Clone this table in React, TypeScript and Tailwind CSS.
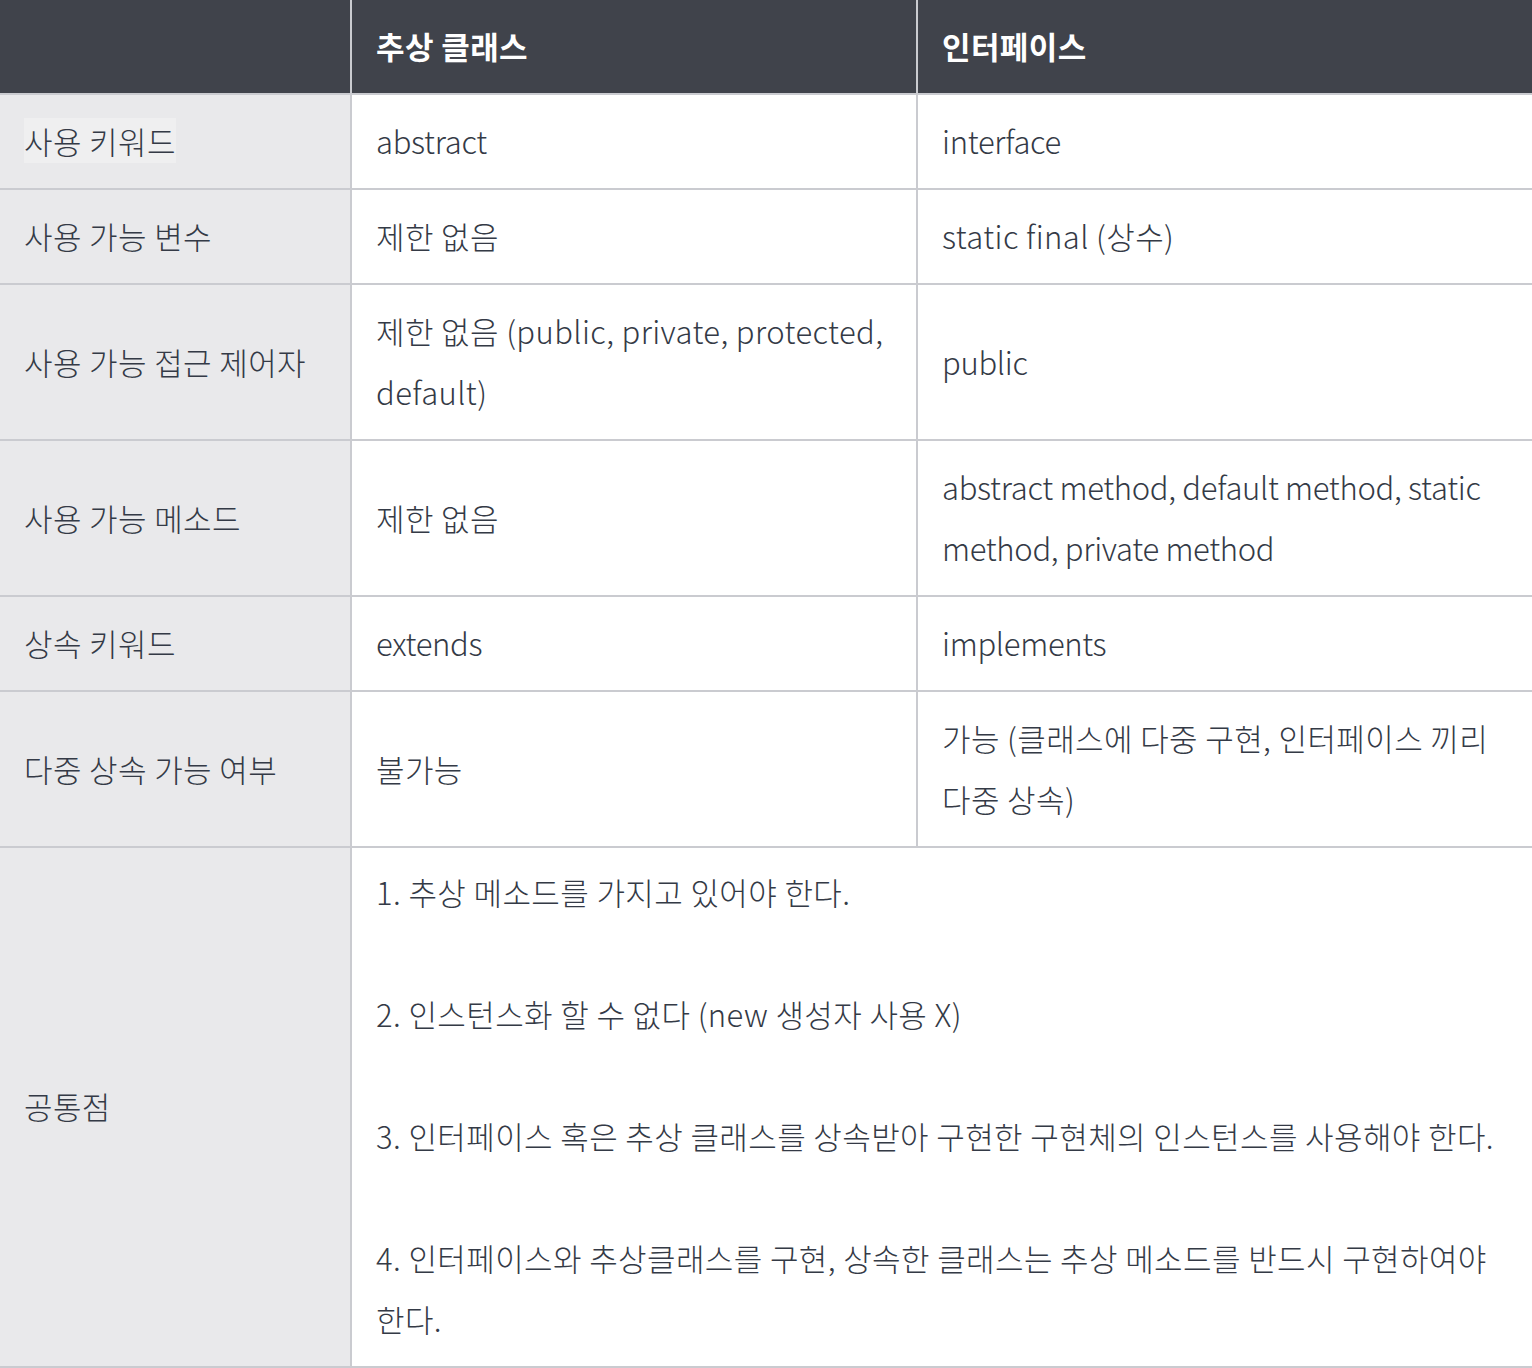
const rows: { label: string; a: string; b: string; latinA?: boolean; latinB?: boolean }[] = [
  { label: "사용 키워드", a: "abstract", b: "interface", latinA: true, latinB: true },
  { label: "사용 가능 변수", a: "제한 없음", b: "static final (상수)" },
  {
    label: "사용 가능 접근 제어자",
    a: "제한 없음 (public, private, protected, default)",
    b: "public",
    latinB: true,
  },
  {
    label: "사용 가능 메소드",
    a: "제한 없음",
    b: "abstract method, default method, static method, private method",
    latinB: true,
  },
  { label: "상속 키워드", a: "extends", b: "implements", latinA: true, latinB: true },
  {
    label: "다중 상속 가능 여부",
    a: "불가능",
    b: "가능 (클래스에 다중 구현, 인터페이스 끼리 다중 상속)",
  },
];

const common = [
  "1. 추상 메소드를 가지고 있어야 한다.",
  "2. 인스턴스화 할 수 없다 (new 생성자 사용 X)",
  "3. 인터페이스 혹은 추상 클래스를 상속받아 구현한 구현체의 인스턴스를 사용해야 한다.",
  "4. 인터페이스와 추상클래스를 구현, 상속한 클래스는 추상 메소드를 반드시 구현하여야 한다.",
];

const border = "border-r-2 border-b-2 border-[#cacbd0] px-6 align-middle";
const cell = `${border} pt-[15px] pb-[17px]`;
const lastCell = `${border} pt-[13px] pb-[17px]`;

export default function App() {
  return (
    <div
      className="w-full overflow-hidden bg-white text-[31px] font-light leading-[61px] tracking-[0.4px] break-keep text-[#343a46]"
      style={{ fontFamily: '"Noto Sans CJK KR", "Noto Sans", sans-serif' }}
    >
      <table className="w-[1536px] table-fixed border-separate border-spacing-0 text-left">
        <colgroup>
          <col className="w-[352px]" />
          <col className="w-[566px]" />
          <col />
        </colgroup>
        <thead>
          <tr className="bg-[#40434b] text-white">
            <th className={`${cell} h-[94px] font-bold`}></th>
            <th className={`${cell} font-bold`}>추상 클래스</th>
            <th className={`${cell} border-r-0 font-bold`}>인터페이스</th>
          </tr>
        </thead>
        <tbody>
          {rows.map((r, i) => (
            <tr key={r.label}>
              <td className={`${cell} bg-[#e9e9eb]`}>
                {i === 0 ? (
                  <span className="bg-[#efeff0]">{r.label}</span>
                ) : (
                  r.label
                )}
              </td>
              <td className={`${cell} ${r.latinA ? "tracking-[-0.3px]" : ""}`}>{r.a}</td>
              <td className={`${cell} border-r-0 pr-7 ${r.latinB ? "tracking-[-0.3px]" : ""}`}>
                {r.b}
              </td>
            </tr>
          ))}
          <tr>
            <td className={`${lastCell} bg-[#e9e9eb]`}>공통점</td>
            <td className={`${lastCell} border-r-0 pr-7`} colSpan={2}>
              {common.map((line, i) => (
                <div key={i}>
                  {i > 0 && <div className="h-[61px]" />}
                  <p>{line}</p>
                </div>
              ))}
            </td>
          </tr>
        </tbody>
      </table>
    </div>
  );
}
